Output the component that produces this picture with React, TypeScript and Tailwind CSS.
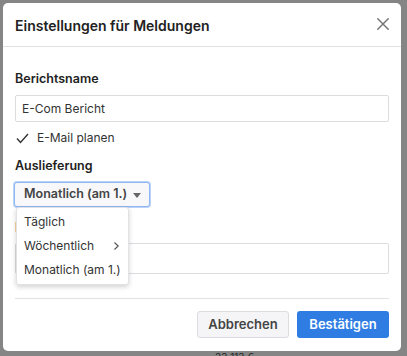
import React from "react";

const font = { fontFamily: "Inter, 'Noto Sans', 'Liberation Sans', sans-serif" };

export default function App() {
  return (
    <div className="relative h-[356px] w-[407px] overflow-hidden bg-[#858585] pl-[3px] pt-[3px]" style={font}>
      <div className="relative flex h-[348px] w-[398px] flex-col rounded-[5px] bg-white">
        {/* header */}
        <div className="flex h-[44px] shrink-0 items-center justify-between border-b border-[#e2e2e6] pl-[12px] pr-[12px]">
          <div className="pt-[1px] text-[14px] font-semibold text-[#222]">Einstellungen für Meldungen</div>
          <svg width="12" height="12" viewBox="0 0 12 12" className="mt-[-1px]">
            <path d="M0.8 0.8L11.2 11.2M11.2 0.8L0.8 11.2" stroke="#767676" strokeWidth="1.5" strokeLinecap="round" />
          </svg>
        </div>
        {/* body */}
        <div className="flex flex-col px-[12px] pt-[23px]">
          <div className="h-[18px] text-[12.5px] font-semibold leading-[18px] text-[#222]">Berichtsname</div>
          <div className="mt-[7px] flex h-[27px] items-center rounded-[2px] border border-[#dcdce0] px-[6px] text-[12px] text-[#333]">
            E-Com Bericht
          </div>
          <div className="mt-[7px] flex h-[18px] items-center">
            <svg width="13" height="11" viewBox="0 0 13 11" className="ml-[1px]">
              <path d="M1 5.5L4.5 9.5L12 1" fill="none" stroke="#333" strokeWidth="1.4" />
            </svg>
            <span className="ml-[8px] text-[12px] text-[#333]">E-Mail planen</span>
          </div>
          <div className="mt-[10px] h-[18px] text-[12.5px] font-semibold leading-[18px] text-[#222]">Auslieferung</div>
          <div className="relative mt-[7px] h-[25px] w-[136px] -ml-[1px]">
            <div className="flex h-full items-center rounded-[3px] border border-[#8fb6f3] bg-[#f8f8fa] pl-[9px] shadow-[0_0_0_1px_#bcd4f8]">
              <span className="whitespace-nowrap text-[12.5px] font-semibold text-[#444]">Monatlich (am 1.)</span>
              <svg width="8" height="5" viewBox="0 0 8 5" className="ml-[6px] mt-[1px]">
                <path d="M0 0H8L4 5Z" fill="#666" />
              </svg>
            </div>
            <div className="absolute left-[2px] top-[25px] z-10 w-[113px] rounded-[3px] border border-[#e2e2e6] bg-white py-[2px] shadow-[0_2px_5px_rgba(0,0,0,0.18)]">
              <div className="flex h-[24px] items-center whitespace-nowrap px-[7px] text-[12px] text-[#333]">Täglich</div>
              <div className="flex h-[24px] items-center justify-between whitespace-nowrap pl-[7px] pr-[9px] text-[12px] text-[#333]">
                <span>Wöchentlich</span>
                <svg width="5" height="8" viewBox="0 0 5 8">
                  <path d="M0.5 0.5L4.2 4L0.5 7.5" fill="none" stroke="#555" strokeWidth="1.2" />
                </svg>
              </div>
              <div className="flex h-[24px] items-center whitespace-nowrap px-[7px] text-[12px] text-[#333]">Monatlich (am 1.)</div>
            </div>
          </div>
          <div className="mt-[12px] h-[18px] text-[12.5px] font-semibold leading-[18px] text-[#222]">Empfänger</div>
          <div className="mt-[6px] h-[31px] rounded-[2px] border border-[#dcdce0]" />
          <div className="mt-[24px] h-px bg-[#e2e2e6]" />
          <div className="mt-[12px] flex justify-end gap-[8px]">
            <button className="h-[27px] w-[92px] rounded-[3px] border border-[#dcdce0] bg-[#f5f5f7] text-[13px] font-semibold text-[#444]">
              Abbrechen
            </button>
            <button className="h-[27px] w-[92px] rounded-[3px] bg-[#2f7de3] text-[13px] font-semibold text-white">
              Bestätigen
            </button>
          </div>
        </div>
      </div>
      <div className="ml-[212px] mt-[1px] text-[10px] leading-[10px] text-[#222]">33 113 €</div>
    </div>
  );
}
